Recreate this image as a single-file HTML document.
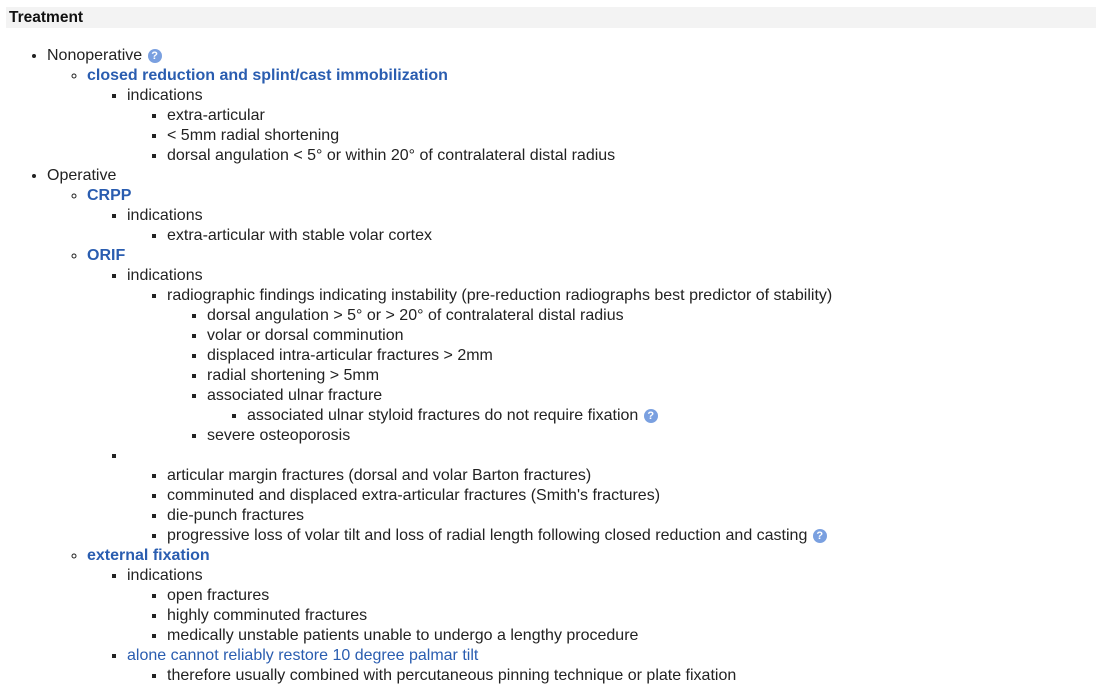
<!DOCTYPE html>
<html><head><style>
body{margin:0;background:#fff;font-family:"Liberation Sans",Arial,sans-serif;color:#222;}
.h{position:absolute;left:6px;top:7px;width:1090px;height:21px;background:#f3f3f3;font-weight:bold;font-size:15.5px;line-height:21px;padding-left:3px;box-sizing:border-box;color:#111}
.c{position:absolute;left:7px;top:46px;font-size:16px;line-height:20px}
ul{margin:0;padding-left:40px}
li{line-height:20px}
.c>ul{list-style:disc}
.c>ul>li>ul{list-style:circle}
.c>ul>li>ul>li ul{list-style:square}
a{color:#2a5db0;text-decoration:none}
b a{font-weight:bold}
.q{display:inline-block;width:14px;height:14px;border-radius:50%;background:#7aa0e0;color:#fff;font-size:11px;line-height:14px;text-align:center;font-weight:bold;vertical-align:1px;margin-left:1px}
</style></head><body>
<div class="h">Treatment</div>
<div class="c"><ul>
<li>Nonoperative <span class="q">?</span>
<ul><li><b><a>closed reduction and splint/cast immobilization</a></b>
<ul><li>indications<ul><li>extra-articular</li><li>&lt; 5mm radial shortening</li><li>dorsal angulation &lt; 5° or within 20° of contralateral distal radius</li></ul></li></ul></li></ul></li>
<li>Operative
<ul><li><b><a>CRPP</a></b><ul><li>indications<ul><li>extra-articular with stable volar cortex</li></ul></li></ul></li>
<li><b><a>ORIF</a></b><ul><li>indications<ul><li>radiographic findings indicating instability (pre-reduction radiographs best predictor of stability)<ul>
<li>dorsal angulation &gt; 5° or &gt; 20° of contralateral distal radius</li><li>volar or dorsal comminution</li><li>displaced intra-articular fractures &gt; 2mm</li><li>radial shortening &gt; 5mm</li><li>associated ulnar fracture<ul><li>associated ulnar styloid fractures do not require fixation <span class="q">?</span></li></ul></li><li>severe osteoporosis</li></ul></li></ul></li>
<li>&nbsp;<ul><li>articular margin fractures (dorsal and volar Barton fractures)</li><li>comminuted and displaced extra-articular fractures (Smith's fractures)</li><li>die-punch fractures</li><li>progressive loss of volar tilt and loss of radial length following closed reduction and casting <span class="q">?</span></li></ul></li></ul></li>
<li><b><a>external fixation</a></b><ul><li>indications<ul><li>open fractures</li><li>highly comminuted fractures</li><li>medically unstable patients unable to undergo a lengthy procedure</li></ul></li>
<li><a>alone cannot reliably restore 10 degree palmar tilt</a><ul><li>therefore usually combined with percutaneous pinning technique or plate fixation</li></ul></li></ul></li></ul></li>
</ul></div>
</body></html>
